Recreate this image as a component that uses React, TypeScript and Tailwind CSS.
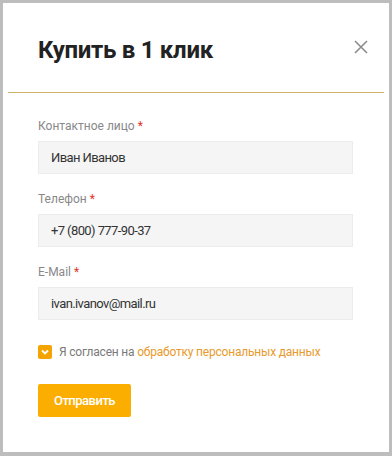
import { useState } from 'react';

const fields = [
  { label: 'Контактное лицо', value: 'Иван Иванов' },
  { label: 'Телефон', value: '+7 (800) 777-90-37' },
  { label: 'E-Mail', value: 'ivan.ivanov@mail.ru' },
];

export default function App() {
  const [agreed, setAgreed] = useState(true);

  return (
    <div
      className="w-[392px] h-[456px] bg-[#bdbdbd] pt-[3px] px-[3px] pb-[4px]"
      style={{ fontFamily: 'Roboto, "Noto Sans", sans-serif' }}
    >
      <div className="h-full bg-white">
        {/* Header */}
        <div className="flex items-start justify-between pt-[33px] pl-[35px] pr-[20px] h-[89px]">
          <h2 className="text-[24px] leading-[28px] font-bold tracking-[-0.3px] text-[#222]">Купить в 1 клик</h2>
          <button className="mt-[3px] p-0 text-[#8c8c8c]" aria-label="Закрыть">
            <svg width="16" height="16" viewBox="0 0 16 16">
              <path d="M2 2L14 14M14 2L2 14" stroke="currentColor" strokeWidth="1.6" />
            </svg>
          </button>
        </div>
        <div className="mx-[5px] h-px bg-[#d2b36a]" />

        {/* Form */}
        <form className="px-[35px] pt-[25px]" onSubmit={(e) => e.preventDefault()}>
          <div className="flex flex-col gap-[17px]">
            {fields.map((f) => (
              <div key={f.label}>
                <label className="block text-[12px] leading-[16px] text-[#888]">
                  {f.label} <span className="text-[#e0352b]">*</span>
                </label>
                <input
                  defaultValue={f.value}
                  className="mt-[7px] block w-[315px] h-[33px] px-[12px] bg-[#f5f5f5] border border-[#ececec] text-[13px] tracking-[-0.6px] text-[#333] outline-none"
                />
              </div>
            ))}
          </div>

          <label className="mt-[24px] flex items-center gap-[7px] text-[12px] leading-[16px] tracking-[-0.2px] text-[#7a7a7a] cursor-pointer">
            <span
              onClick={() => setAgreed(!agreed)}
              className={`flex items-center justify-center w-[14px] h-[14px] rounded-[2px] ${agreed ? 'bg-[#f5a300]' : 'bg-white border border-[#ccc]'}`}
            >
              {agreed && (
                <svg width="10" height="10" viewBox="0 0 10 10">
                  <path d="M2 3.5L5 6.5L8 3.5" stroke="white" strokeWidth="1.8" fill="none" />
                </svg>
              )}
            </span>
            <span>
              Я согласен на <span className="text-[#e89a2c]">обработку персональных данных</span>
            </span>
          </label>

          <button
            type="submit"
            className="mt-[24px] w-[93px] h-[33px] rounded-[2px] bg-[#fcae00] text-white text-[13px] font-medium tracking-[-0.5px]"
          >
            Отправить
          </button>
        </form>
      </div>
    </div>
  );
}
